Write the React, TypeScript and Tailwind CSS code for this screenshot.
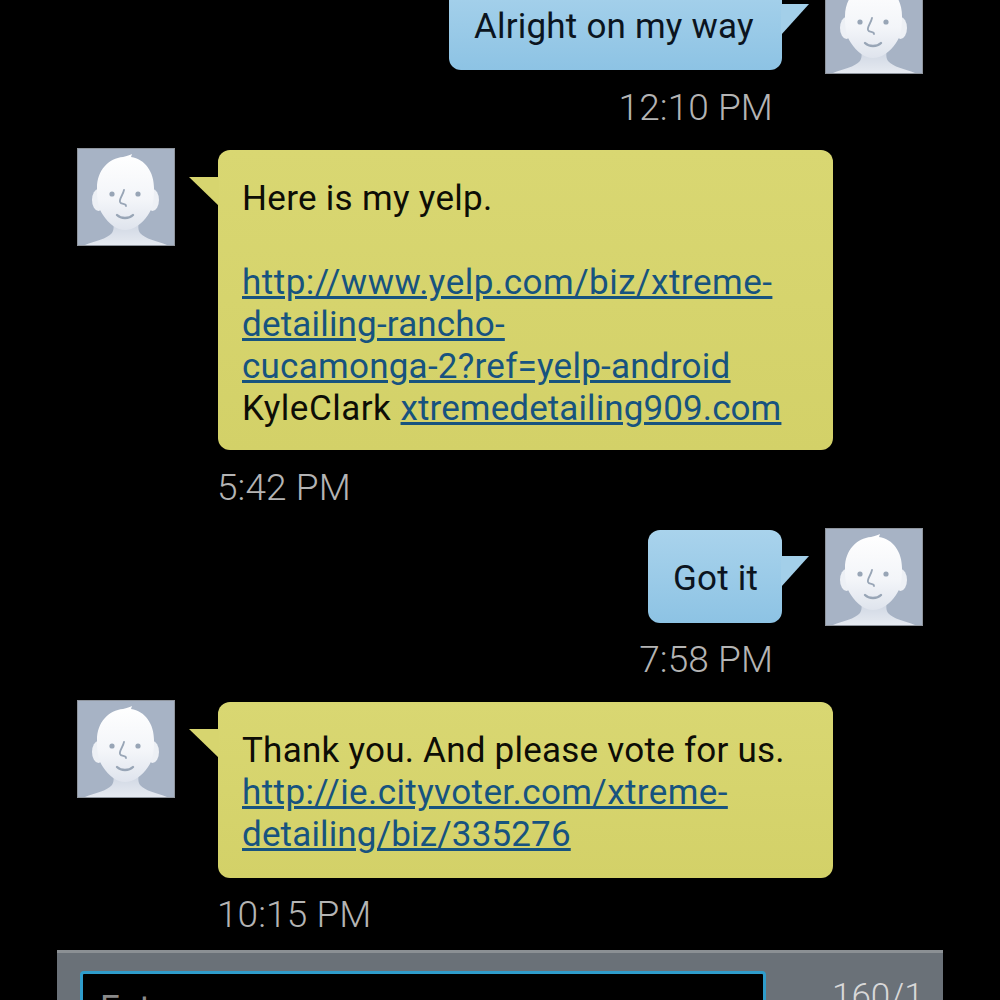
import React from 'react';

const Avatar = () => (
    <svg width="98" height="98" viewBox="0 0 98 98" className="shrink-0 block">
        <defs>
            <linearGradient id="face" x1="0" y1="0" x2="0" y2="1">
                <stop offset="0" stopColor="#ffffff" />
                <stop offset="0.6" stopColor="#f3f5f9" />
                <stop offset="1" stopColor="#dfe4ed" />
            </linearGradient>
            <linearGradient id="neck" x1="0" y1="0" x2="0" y2="1">
                <stop offset="0" stopColor="#ccd4e1" />
                <stop offset="1" stopColor="#e6eaf1" />
            </linearGradient>
        </defs>
        <rect x="0.5" y="0.5" width="97" height="97" fill="#a7b3c5" stroke="#8f959e" />
        <path d="M8 97C18 93 30 91 35 85C37 82 37 78 36 72L62 72C61 78 61 82 63 85C68 91 80 93 90 97Z" fill="url(#neck)" />
        <ellipse cx="21.5" cy="52" rx="6.5" ry="11" fill="#edf0f5" />
        <ellipse cx="75.5" cy="52" rx="6.5" ry="11" fill="#edf0f5" />
        <path d="M20 40C20 22 32 10 46 9C50 8 53 7 55 6L54 9C68 11 77 24 77 40C77 52 76 60 71 67C65 76 56 82 48 82C40 82 32 76 26 67C21 60 20 52 20 40Z" fill="url(#face)" />
        <circle cx="35" cy="46" r="2.6" fill="#98a5b6" />
        <circle cx="61" cy="46" r="2.6" fill="#98a5b6" />
        <path d="M47 42C46 47 42 51 43 54C44 57 49 55 49 58" fill="none" stroke="#98a5b6" strokeWidth="1.8" strokeLinecap="round" />
        <path d="M40 67C44 71 52 71 56 67" fill="none" stroke="#98a5b6" strokeWidth="2.4" strokeLinecap="round" />
    </svg>
);

const linkClass = 'text-[#17537f] underline';

const Received = ({ children, tall }: { children: React.ReactNode; tall?: boolean }) => (
    <div className="flex items-start pl-[77px]">
        <Avatar />
        <div className="relative ml-[43px] mt-[2px] w-[615px]">
            <svg width="30" height="32" viewBox="0 0 30 32" className="absolute -left-[29px] top-[26px]">
                <path d="M0 1L30 1L30 30Z" fill="#d7d56f" />
            </svg>
            <div
                className={`rounded-[12px] bg-gradient-to-b from-[#d9d772] to-[#d3d168] pl-6 pt-[28px] text-[35px] leading-[42px] text-[#0d0d06] ${
                    tall ? 'pb-[20px]' : 'pb-[22px]'
                }`}
            >
                {children}
            </div>
        </div>
    </div>
);

const Sent = ({ text, className }: { text: string; className: string }) => (
    <div className="flex items-start justify-end pr-[77px]">
        <div className={`relative mr-[43px] mt-[2px] rounded-[12px] bg-gradient-to-b from-[#a9d3ec] to-[#8dc3e4] pl-[25px] text-[35px] leading-[42px] tracking-[0.2px] text-[#0b1420] ${className}`}>
            {text}
            <svg width="28" height="34" viewBox="0 0 28 34" className="absolute -right-[27px] top-[25px]">
                <path d="M0 1L28 1L0 32Z" fill="#a3cfe9" />
            </svg>
        </div>
        <Avatar />
    </div>
);

const Time = ({ text, side }: { text: string; side: 'left' | 'right' }) => (
    <div
        className={`h-[42px] text-[37px] font-light leading-[44px] tracking-[0.1px] text-[#b4b4b4] ${
            side === 'left' ? 'pl-[217px]' : 'pr-[227px] text-right'
        }`}
    >
        {text}
    </div>
);

export default function App() {
    return (
        <div className="h-[1000px] w-[1000px] overflow-hidden bg-black font-['Roboto',sans-serif]">
            <div className="-mt-[24px]">
                <Sent text="Alright on my way" className="pt-[28px] pb-[22px] w-[333px]" />
                <div className="mt-[12px]">
                    <Time text="12:10 PM" side="right" />
                </div>

                <div className="mt-[20px]">
                    <Received tall>
                        <div className="tracking-[0.3px]">Here is my yelp.</div>
                        <div className="h-[42px]" />
                        <div className={`${linkClass} tracking-[0.5px]`}>http://www.yelp.com/biz/xtreme-</div>
                        <div className={`${linkClass} tracking-[0.18px]`}>detailing-rancho-</div>
                        <div className={`${linkClass} tracking-[0.25px]`}>cucamonga-2?ref=yelp-android</div>
                        <div className="tracking-[0.5px]">
                            KyleClark{' '}
                            <span className={`${linkClass} tracking-[0.1px]`}>xtremedetailing909.com</span>
                        </div>
                    </Received>
                </div>
                <div className="mt-[16px]">
                    <Time text="5:42 PM" side="left" />
                </div>

                <div className="mt-[20px]">
                    <Sent text="Got it" className="pt-[28px] pb-[23px] w-[134px]" />
                </div>
                <div className="mt-[12px]">
                    <Time text="7:58 PM" side="right" />
                </div>

                <div className="mt-[20px]">
                    <Received>
                        <div className="tracking-[0.24px]">Thank you. And please vote for us.</div>
                        <div className={`${linkClass} tracking-[0.4px]`}>http://ie.cityvoter.com/xtreme-</div>
                        <div className={`${linkClass} tracking-[0.15px]`}>detailing/biz/335276</div>
                    </Received>
                </div>
                <div className="mt-[15px]">
                    <Time text="10:15 PM" side="left" />
                </div>

                {/* composer, cut off by the bottom of the shot */}
                <div className="mx-[57px] mt-[15px] flex h-[120px] items-start border-t-[3px] border-[#8b9094] bg-[#6a7178] pl-[23px] pt-[18px]">
                    <div className="h-[100px] w-[686px] rounded-[4px] border-[3px] border-[#2f9ccb] bg-black pl-[17px] pt-[14px] text-[35px] leading-[42px] text-[#8a8a8a]">
                        Enter message
                    </div>
                    <div className="ml-[66px] mt-[5px] text-[35px] font-light leading-[42px] text-[#d8d8d8]">160/1</div>
                </div>
            </div>
        </div>
    );
}
